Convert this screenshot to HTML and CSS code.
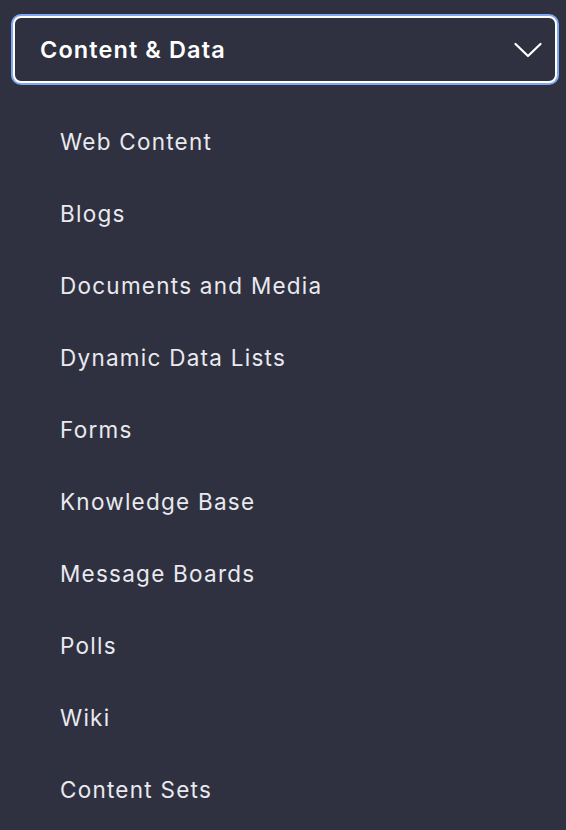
FILE: index.html
```html
<!DOCTYPE html>
<html lang="en">
<head>
<meta charset="utf-8">
<title>Content &amp; Data</title>
<link rel="stylesheet" href="styles.css">
</head>
<body>
<nav class="panel">
  <button class="toggle" type="button">
    <span class="toggle-label">Content &amp; Data</span>
    <svg class="chevron" width="28" height="16" viewBox="0 0 28 16" aria-hidden="true">
      <path d="M1.5 2 L14 14 L26.5 2" fill="none" stroke="#ffffff" stroke-width="2.2" stroke-linecap="round" stroke-linejoin="round"/>
    </svg>
  </button>
  <ul class="menu">
    <li class="menu-item">Web Content</li>
    <li class="menu-item">Blogs</li>
    <li class="menu-item">Documents and Media</li>
    <li class="menu-item">Dynamic Data Lists</li>
    <li class="menu-item">Forms</li>
    <li class="menu-item">Knowledge Base</li>
    <li class="menu-item">Message Boards</li>
    <li class="menu-item">Polls</li>
    <li class="menu-item">Wiki</li>
    <li class="menu-item">Content Sets</li>
  </ul>
</nav>
</body>
</html>
```
FILE: styles.css
```css
html, body {
  margin: 0;
  padding: 0;
  background: #2f3140;
}
body {
  font-family: Inter, "Noto Sans", "Liberation Sans", sans-serif;
  color: #e9e9ef;
}
.panel {
  padding: 16px 9px 0 13px;
}
.toggle {
  display: flex;
  align-items: center;
  justify-content: space-between;
  width: 100%;
  height: 67px;
  box-sizing: border-box;
  background: #2f3140;
  border: 2px solid #ffffff;
  border-radius: 8px;
  box-shadow: 0 0 0 2px #7fa8f0;
  padding: 0 13px 0 25px;
  font-family: inherit;
  color: #ffffff;
  cursor: pointer;
}
.toggle-label {
  font-size: 23.5px;
  font-weight: 600;
  letter-spacing: 1.1px;
}
.chevron {
  display: block;
}
.menu {
  list-style: none;
  margin: 23px 0 0 0;
  padding: 0 0 0 47px;
}
.menu-item {
  height: 72px;
  line-height: 72px;
  font-size: 22.5px;
  font-weight: 400;
  letter-spacing: 1.25px;
  color: #e9e9ef;
}
```
